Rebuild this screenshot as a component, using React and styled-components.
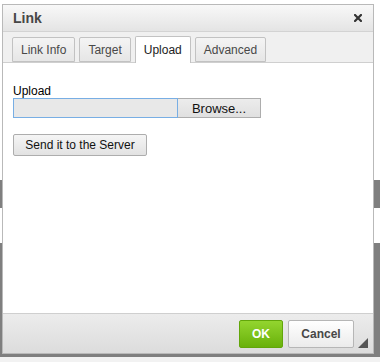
import styled, { createGlobalStyle } from "styled-components";

const GlobalStyle = createGlobalStyle`
    html, body {
        margin: 0;
        padding: 0;
        background: #ffffff;
    }
    * {
        box-sizing: border-box;
    }
`

const Page = styled.div`
    position: relative;
    width: 380px;
    height: 362px;
    overflow: hidden;
    background: #ffffff;
    font-family: "Liberation Sans", Arial, sans-serif;
`

const Backdrop = styled.div`
    position: absolute;
    left: 0;
    right: 0;
    top: ${(p) => p.top}px;
    height: ${(p) => p.height}px;
    background: ${(p) => p.color};
`

const Dialog = styled.div`
    position: absolute;
    left: 2px;
    top: 4px;
    width: 372px;
    height: 350px;
    display: flex;
    flex-direction: column;
    background: #ffffff;
    border: 1px solid #b9b9b9;
`

const TitleBar = styled.div`
    height: 27px;
    display: flex;
    align-items: center;
    justify-content: space-between;
    padding: 0 11px 0 10px;
    background: linear-gradient(#f8f8f8, #e4e4e4);
    border-bottom: 1px solid #d3d3d3;
`

const Title = styled.span`
    font-size: 14px;
    font-weight: bold;
    color: #474747;
`

const TabStrip = styled.div`
    height: 31px;
    display: flex;
    align-items: flex-end;
    gap: 4px;
    padding: 0 0 0 9px;
    background: #f0f0f0;
    border-bottom: 1px solid #cfcfcf;
`

const Tab = styled.div`
    height: ${(p) => (p.active ? 27 : 25)}px;
    margin-bottom: ${(p) => (p.active ? -1 : 0)}px;
    padding: 0 ${(p) => p.pad}px;
    display: flex;
    align-items: center;
    font-size: 12px;
    color: ${(p) => (p.active ? "#222" : "#484848")};
    background: ${(p) => (p.active ? "#ffffff" : "linear-gradient(#f4f4f4, #e6e6e6)")};
    border: 1px solid #c2c2c2;
    border-bottom: ${(p) => (p.active ? "none" : "1px solid #c2c2c2")};
    border-radius: 2px 2px 0 0;
`

const Body = styled.div`
    flex: 1;
    padding: 21px 10px 0 10px;
    display: flex;
    flex-direction: column;
`

const Label = styled.div`
    font-size: 12px;
    color: #000;
    line-height: 14px;
`

const FileRow = styled.div`
    display: flex;
`

const FileField = styled.div`
    width: 165px;
    height: 20px;
    background: #e8e8e8;
    border: 1px solid #78aee4;
`

const Button = styled.div`
    display: flex;
    align-items: center;
    justify-content: center;
    width: ${(p) => p.width}px;
    height: ${(p) => p.height}px;
    font-size: ${(p) => p.size}px;
    color: #111;
    background: linear-gradient(#f5f5f5, #e2e2e2);
    border: 1px solid #adadad;
    border-radius: 2px;
`

const BrowseButton = styled(Button)`
    background: linear-gradient(#ececec, #e0e0e0);
    border-radius: 0;
    border-left: none;
`

const SendRow = styled.div`
    margin-top: 16px;
`

const Footer = styled.div`
    height: 40px;
    display: flex;
    align-items: center;
    justify-content: flex-end;
    gap: 5px;
    padding: 0 19px 0 0;
    position: relative;
    background: linear-gradient(#ececec, #dcdcdc);
    border-top: 1px solid #cfcfcf;
`

const DialogButton = styled.div`
    height: 28px;
    width: ${(p) => p.width}px;
    display: flex;
    align-items: center;
    justify-content: center;
    font-size: 12px;
    font-weight: bold;
    color: ${(p) => (p.primary ? "#ffffff" : "#474747")};
    background: ${(p) => (p.primary ? "linear-gradient(#93d52f, #69b10b)" : "linear-gradient(#ffffff, #ebebeb)")};
    border: 1px solid ${(p) => (p.primary ? "#62a60a" : "#b6b6b6")};
    border-radius: 2px;
`

const Grip = styled.svg`
    position: absolute;
    right: 5px;
    bottom: 5px;
`

const App = () => {
    return (
        <Page>
            <GlobalStyle />
            <Backdrop top={180} height={28} color="#7f7f7f" />
            <Backdrop top={243} height={114} color="#7f7f7f" />
            <Backdrop top={357} height={5} color="#f2f2f2" />
            <Dialog>
                <TitleBar>
                    <Title>Link</Title>
                    <svg width="8" height="8" viewBox="0 0 8 8">
                        <path d="M1 1 L7 7 M7 1 L1 7" stroke="#333" strokeWidth="2.2" strokeLinecap="square" />
                    </svg>
                </TitleBar>
                <TabStrip>
                    <Tab pad={8}>Link Info</Tab>
                    <Tab pad={8}>Target</Tab>
                    <Tab pad={8} active>Upload</Tab>
                    <Tab pad={8}>Advanced</Tab>
                </TabStrip>
                <Body>
                    <Label>Upload</Label>
                    <FileRow>
                        <FileField />
                        <BrowseButton width={83} height={20} size={13}>Browse...</BrowseButton>
                    </FileRow>
                    <SendRow>
                        <Button width={134} height={22} size={12}>Send it to the Server</Button>
                    </SendRow>
                </Body>
                <Footer>
                    <DialogButton primary width={44}>OK</DialogButton>
                    <DialogButton width={66}>Cancel</DialogButton>
                    <Grip width="10" height="10" viewBox="0 0 10 10">
                        <polygon points="10,0 10,10 0,10" fill="#555" />
                    </Grip>
                </Footer>
            </Dialog>
        </Page>
    );
}

export default App
